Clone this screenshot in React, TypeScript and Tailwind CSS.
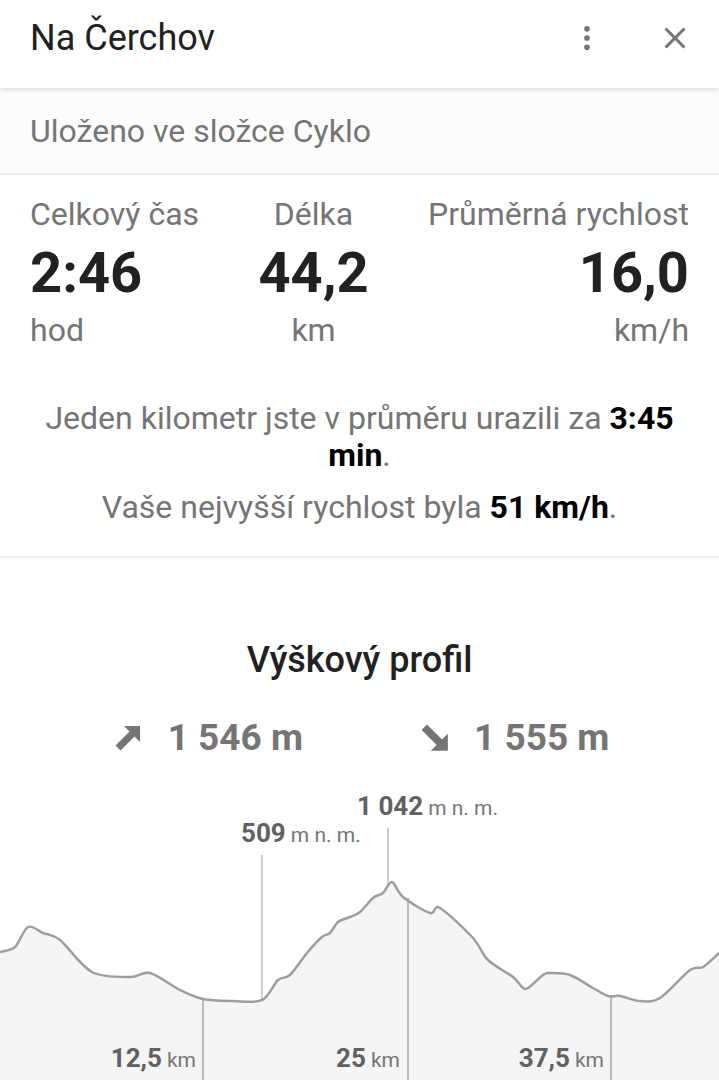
import React from "react";

const FONT = { fontFamily: "Roboto, 'Noto Sans', Arial, sans-serif" };

// profile points in page coordinates (chart box starts at y=780)
const PROFILE: [number, number][] = [
  [0, 952], [15, 947], [28, 927], [43, 933], [60, 940], [92, 972], [130, 977],
  [150, 973], [180, 990], [203, 999], [233, 1001], [262, 1000], [278, 980],
  [290, 975], [307, 953], [322, 937], [330, 933], [338, 922], [350, 917],
  [360, 912], [373, 898], [383, 893], [392, 882], [403, 897], [430, 913],
  [440, 908], [473, 938], [488, 960], [513, 977], [522, 987], [528, 988],
  [543, 975], [550, 973], [570, 975], [593, 988], [608, 996], [620, 996],
  [640, 1001], [660, 998], [690, 970], [703, 967], [719, 953],
];

const TOP = 780;

// catmull-rom -> bezier, gently smoothed
function smoothPath(pts: [number, number][]) {
  const p = pts.map(([x, y]) => [x, y - TOP]);
  let d = `M${p[0][0]} ${p[0][1]}`;
  for (let i = 0; i < p.length - 1; i++) {
    const p0 = p[i - 1] ?? p[i];
    const p1 = p[i];
    const p2 = p[i + 1];
    const p3 = p[i + 2] ?? p2;
    const t = 0.16;
    const c1x = p1[0] + (p2[0] - p0[0]) * t;
    const c1y = p1[1] + (p2[1] - p0[1]) * t;
    const c2x = p2[0] - (p3[0] - p1[0]) * t;
    const c2y = p2[1] - (p3[1] - p1[1]) * t;
    d += ` C${c1x.toFixed(1)} ${c1y.toFixed(1)} ${c2x.toFixed(1)} ${c2y.toFixed(1)} ${p2[0]} ${p2[1]}`;
  }
  return d;
}

function ArrowUp({ className = "" }: { className?: string }) {
  return (
    <svg viewBox="0 0 28 28" className={className} fill="currentColor">
      <polygon points="1.5,21.5 15.5,7.5 10,2 26,2 26,18 20.5,12.5 6.5,26.5" />
    </svg>
  );
}

function Stat({ label, value, unit, align }: { label: string; value: string; unit: string; align: string }) {
  return (
    <div className={`flex flex-col ${align}`}>
      <span className="text-[32px] leading-[38px] text-[#757575]">{label}</span>
      <span className="mt-[8px] text-[56px] font-bold leading-[64px] text-[#212121]">{value}</span>
      <span className="mt-[6px] text-[32px] leading-[38px] text-[#757575]">{unit}</span>
    </div>
  );
}

function Mark({ value, unit, className }: { value: string; unit: string; className: string }) {
  return (
    <div className={`absolute flex items-baseline gap-[5px] leading-[28px] ${className}`}>
      <span className="text-[26px] font-bold text-[#616161]">{value}</span>
      <span className="text-[21px] text-[#757575]">{unit}</span>
    </div>
  );
}

function Profile() {
  const line = smoothPath(PROFILE);
  const area = `${line} L719 300 L0 300 Z`;
  return (
    <div className="relative h-[300px] w-full">
      <svg viewBox="0 0 719 300" className="absolute inset-0 h-full w-full">
        <path d={area} fill="#f5f5f5" />
        <line x1="262" y1={855 - TOP} x2="262" y2={1000 - TOP} stroke="#bdbdbd" strokeWidth="1.5" />
        <line x1="388" y1={828 - TOP} x2="388" y2={885 - TOP} stroke="#bdbdbd" strokeWidth="1.5" />
        <line x1="203" y1={999 - TOP} x2="203" y2="300" stroke="#a8a8a8" strokeWidth="1.5" />
        <line x1="408" y1={898 - TOP} x2="408" y2="300" stroke="#a8a8a8" strokeWidth="1.5" />
        <line x1="611" y1={996 - TOP} x2="611" y2="300" stroke="#a8a8a8" strokeWidth="1.5" />
        <path d={line} fill="none" stroke="#9e9e9e" strokeWidth="2.5" strokeLinejoin="round" />
      </svg>

      <Mark value="509" unit="m n. m." className="left-[241px] top-[39px]" />
      <Mark value="1 042" unit="m n. m." className="left-[357px] top-[12px]" />
      <Mark value="12,5" unit="km" className="right-[523px] top-[264px]" />
      <Mark value="25" unit="km" className="right-[319px] top-[264px]" />
      <Mark value="37,5" unit="km" className="right-[115px] top-[264px]" />
    </div>
  );
}

export default function App() {
  return (
    <div className="h-[1080px] w-[719px] overflow-hidden bg-white" style={FONT}>
      {/* Hlavička */}
      <header className="relative z-10 flex h-[88px] items-center bg-white pb-[12px] pl-[30px] pr-[26px] shadow-[0_2px_4px_rgba(0,0,0,0.12)]">
        <h1 className="flex-1 text-[36px] leading-[44px] text-[#212121]">Na Čerchov</h1>
        <svg viewBox="0 0 24 24" className="mr-[53px] h-[34px] w-[34px] text-[#757575]" fill="currentColor">
          <circle cx="12" cy="5.5" r="2" />
          <circle cx="12" cy="12" r="2" />
          <circle cx="12" cy="18.5" r="2" />
        </svg>
        <svg viewBox="0 0 24 24" className="h-[36px] w-[36px] text-[#757575]" fill="currentColor">
          <path d="M19 6.41 17.59 5 12 10.59 6.41 5 5 6.41 10.59 12 5 17.59 6.41 19 12 13.41 17.59 19 19 17.59 13.41 12z" />
        </svg>
      </header>

      <div className="flex h-[87px] items-center border-b-2 border-[#eeeeee] bg-[#fcfcfc] px-[30px]">
        <span className="text-[32px] leading-[38px] text-[#757575]">Uloženo ve složce Cyklo</span>
      </div>

      {/* Statistiky */}
      <section className="border-b-2 border-[#eeeeee] px-[30px] pb-[30px] pt-[20px]">
        <div className="flex justify-between">
          <Stat label="Celkový čas" value="2:46" unit="hod" align="items-start" />
          <Stat label="Délka" value="44,2" unit="km" align="items-center" />
          <Stat label="Průměrná rychlost" value="16,0" unit="km/h" align="items-end" />
        </div>
        <p className="mt-[51px] text-center text-[32px] leading-[37px] text-[#757575]">
          Jeden kilometr jste v průměru urazili za <b className="font-bold text-black">3:45</b>{" "}
          <b className="font-bold text-black">min</b>.
        </p>
        <p className="mt-[15px] text-center text-[32px] leading-[37px] text-[#757575]">
          Vaše nejvyšší rychlost byla <b className="font-bold text-black">51 km/h</b>.
        </p>
      </section>

      {/* Výškový profil */}
      <section className="pt-[80px]">
        <h2 className="text-center text-[36px] font-medium leading-[44px] text-[#212121]">Výškový profil</h2>
        <div className="mt-[34px] flex h-[44px] items-center text-[#757575]">
          <div className="flex w-[360px] items-center justify-end pr-[57px]">
            <ArrowUp className="mr-[26px] h-[28px] w-[28px]" />
            <span className="text-[37px] font-bold leading-[44px]">1 546 m</span>
          </div>
          <div className="flex items-center pl-[60px]">
            <ArrowUp className="mr-[24px] h-[30px] w-[30px] rotate-90" />
            <span className="text-[37px] font-bold leading-[44px]">1 555 m</span>
          </div>
        </div>
        <div className="mt-[20px]">
          <Profile />
        </div>
      </section>
    </div>
  );
}
